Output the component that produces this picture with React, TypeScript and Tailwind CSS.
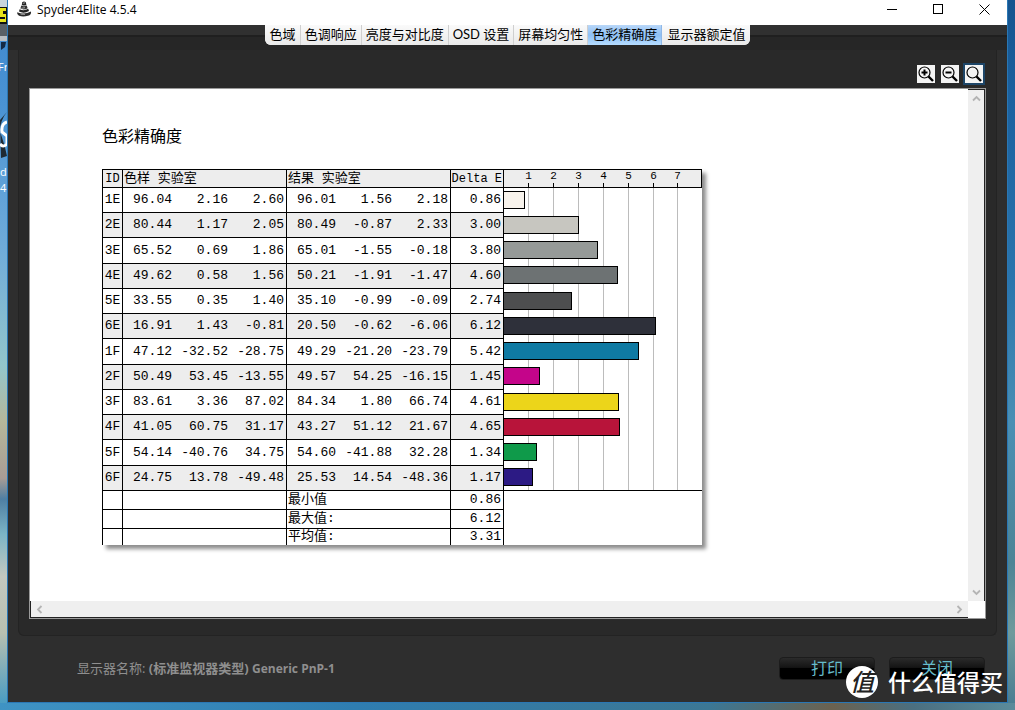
import React, { useState } from "react";

interface IPatch {
  id: string;
  sample: string[];
  result: string[];
  deltaE: string;
  color: string;
}

const patches: IPatch[] = [
  { id: "1E", sample: ["96.04", "2.16", "2.60"], result: ["96.01", "1.56", "2.18"], deltaE: "0.86", color: "#f8f3ec" },
  { id: "2E", sample: ["80.44", "1.17", "2.05"], result: ["80.49", "-0.87", "2.33"], deltaE: "3.00", color: "#c7c6c0" },
  { id: "3E", sample: ["65.52", "0.69", "1.86"], result: ["65.01", "-1.55", "-0.18"], deltaE: "3.80", color: "#969a98" },
  { id: "4E", sample: ["49.62", "0.58", "1.56"], result: ["50.21", "-1.91", "-1.47"], deltaE: "4.60", color: "#6d7273" },
  { id: "5E", sample: ["33.55", "0.35", "1.40"], result: ["35.10", "-0.99", "-0.09"], deltaE: "2.74", color: "#4d4e4f" },
  { id: "6E", sample: ["16.91", "1.43", "-0.81"], result: ["20.50", "-0.62", "-6.06"], deltaE: "6.12", color: "#2e303a" },
  { id: "1F", sample: ["47.12", "-32.52", "-28.75"], result: ["49.29", "-21.20", "-23.79"], deltaE: "5.42", color: "#0f7aa3" },
  { id: "2F", sample: ["50.49", "53.45", "-13.55"], result: ["49.57", "54.25", "-16.15"], deltaE: "1.45", color: "#c4058a" },
  { id: "3F", sample: ["83.61", "3.36", "87.02"], result: ["84.34", "1.80", "66.74"], deltaE: "4.61", color: "#ecd51a" },
  { id: "4F", sample: ["41.05", "60.75", "31.17"], result: ["43.27", "51.12", "21.67"], deltaE: "4.65", color: "#b8143a" },
  { id: "5F", sample: ["54.14", "-40.76", "34.75"], result: ["54.60", "-41.88", "32.28"], deltaE: "1.34", color: "#0f9a4a" },
  { id: "6F", sample: ["24.75", "13.78", "-49.48"], result: ["25.53", "14.54", "-48.36"], deltaE: "1.17", color: "#2c1a84" },
];

const summary = [
  { label: "最小值", value: "0.86" },
  { label: "最大值:", value: "6.12" },
  { label: "平均值:", value: "3.31" },
];

const tabs = ["色域", "色调响应", "亮度与对比度", "OSD 设置", "屏幕均匀性", "色彩精确度", "显示器额定值"];

// Chart scale
const UNIT = 24.85;
const ROW = 25.25;
const ticks = [1, 2, 3, 4, 5, 6, 7];
const tickX = (n: number) => Math.floor(n * UNIT) + 0.5;

const cell = "border-l border-t border-black p-0";

const Values = ({ values }: { values: string[] }) => (
  <div className="grid grid-cols-[49px_56px_56px] pr-0.5 text-right">
    {values.map((v, i) => (
      <span key={i}>{v}</span>
    ))}
  </div>
);

const AxisLabels = () => (
  <svg width="197" height="17" className="block">
    {ticks.map((n) => (
      <g key={n}>
        <text x={tickX(n)} y="9" textAnchor="middle" fontSize="11">
          {n}
        </text>
        <line x1={tickX(n)} x2={tickX(n)} y1="13" y2="17" stroke="#000" />
      </g>
    ))}
  </svg>
);

const DeltaChart = () => (
  <svg width="198" height="302" className="block">
    {ticks.map((n) => (
      <line key={n} x1={tickX(n)} x2={tickX(n)} y1="0" y2="302" stroke="#bcbcbc" />
    ))}
    {patches.map((p, i) => (
      <rect
        key={p.id}
        x="-1.5"
        y={Math.floor(i * ROW) + 3.5}
        width={Math.round(Number(p.deltaE) * UNIT) + 1}
        height="17"
        fill={p.color}
        stroke="#000"
      />
    ))}
  </svg>
);

const AccuracyTable = () => (
  <table className="border-separate border-spacing-0 bg-white font-['Liberation_Mono','Noto_Sans_CJK_SC',monospace] text-[13px] leading-4 text-black shadow-[4px_4px_4px_rgba(0,0,0,0.45)]">
    <thead>
      <tr className="h-[18px] bg-[#ededed] text-left">
        <th className={`${cell} w-5 text-center text-xs leading-4 font-normal`}>ID</th>
        <th className={`${cell} w-[164px] pl-px font-normal`}>色样 实验室</th>
        <th className={`${cell} w-[164px] pl-px font-normal`}>结果 实验室</th>
        <th className={`${cell} w-[53px] pr-px text-right text-xs leading-4 font-normal`}>Delta E</th>
        <th className={`${cell} border-r font-normal`}>
          <AxisLabels />
        </th>
      </tr>
    </thead>
    <tbody>
      {patches.map((p, i) => (
        <tr key={p.id} className={i % 4 === 2 ? "h-[26px]" : "h-[25px]"}>
          <td className={`${cell} text-center ${i % 2 ? "bg-[#ededed]" : ""}`}>{p.id}</td>
          <td className={`${cell} ${i % 2 ? "bg-[#ededed]" : ""}`}>
            <Values values={p.sample} />
          </td>
          <td className={`${cell} ${i % 2 ? "bg-[#ededed]" : ""}`}>
            <Values values={p.result} />
          </td>
          <td className={`${cell} pr-0.5 text-right ${i % 2 ? "bg-[#ededed]" : ""}`}>{p.deltaE}</td>
          {i === 0 && (
            <td rowSpan={patches.length} className={cell}>
              <DeltaChart />
            </td>
          )}
        </tr>
      ))}
      {summary.map((s, i) => (
        <tr key={s.label} className={i === 2 ? "h-[17px]" : "h-[19px]"}>
          <td className={cell}></td>
          <td className={cell}></td>
          <td className={`${cell} pl-px`}>{s.label}</td>
          <td className={`${cell} pr-0.5 text-right`}>{s.value}</td>
          {i === 0 && <td rowSpan={3} className={cell}></td>}
        </tr>
      ))}
    </tbody>
  </table>
);

const Magnifier = ({ sign }: { sign?: "plus" | "minus" }) => (
  <svg width="18" height="18" viewBox="0 0 18 18" fill="none" stroke="#000">
    <circle cx="7.5" cy="7.5" r="5.5" strokeWidth="1.2" />
    <path d="M11.5 11.5L16 16" strokeWidth="2.4" />
    {sign && <path d="M4.5 7.5H10.5" strokeWidth="2" />}
    {sign === "plus" && <path d="M7.5 4.5V10.5" strokeWidth="2" />}
  </svg>
);

const Chevron = ({ d }: { d: string }) => (
  <svg width="9" height="9" viewBox="0 0 9 9" fill="none" stroke="#b4b4b4" strokeWidth="1.8">
    <path d={d} />
  </svg>
);

const TitleBar = () => (
  <header className="flex h-[25px] items-start bg-white text-black">
    <svg width="16" height="17" viewBox="0 0 16 17" className="ml-2 shrink-0">
      <path d="M6.2 2.2Q8 0.6 9.8 2.2L10.4 5Q8 6.2 5.8 5Z" fill="#222" />
      <path d="M5.3 5.6Q8 7 10.8 5.5L11.6 8.2Q8 10.4 4.4 8.6Z" fill="#333" />
      <path d="M3.6 9.2Q8 11.4 12.2 8.8L13 11Q8 14 3 11.6Z" fill="#222" />
      <path d="M1.2 12.2Q8 15 15 11.4Q15.6 14.6 12 15.8Q7 17 3 15.8Q0.6 14.6 1.2 12.2Z" fill="#2b2b2b" />
      <path d="M6.8 3.4L9 2.8M5.4 8.3L9 7.7M4.6 14.2L9 14.4" stroke="#bbb" strokeWidth="0.8" />
    </svg>
    <h1 className="ml-[5px] flex-1 text-xs leading-5">Spyder4Elite 4.5.4</h1>
    <button aria-label="最小化" className="flex h-[19px] w-[46px] items-center justify-center">
      <svg width="11" height="11" stroke="#000">
        <path d="M0 5.5H10" />
      </svg>
    </button>
    <button aria-label="最大化" className="flex h-[19px] w-[46px] items-center justify-center">
      <svg width="11" height="11" stroke="#000" fill="none">
        <rect x="0.5" y="0.5" width="9" height="9" />
      </svg>
    </button>
    <button aria-label="关闭窗口" className="flex h-[19px] w-[46px] items-center justify-center">
      <svg width="11" height="11" stroke="#000">
        <path d="M0.5 0.5L10.5 10.5M10.5 0.5L0.5 10.5" />
      </svg>
    </button>
  </header>
);

// Slices of the desktop icons that show beside the window
const DesktopEdge = () => (
  <svg width="7" height="200" className="block">
    <rect y="0" width="7" height="7" fill="#c9d6dc" />
    <rect y="7" width="7" height="17" fill="#111" />
    <rect y="8" width="6" height="14" fill="#e8e51c" />
    <path d="M3 11H6V14H3ZM0 17H5V19H0Z" fill="#111" />
    <rect y="24" width="7" height="12" fill="#596066" />
    <rect y="36" width="7" height="5" fill="#b9bec2" />
    <path d="M1 42H6L5 47L1 50Z" fill="#152a44" />
    <text x="-2" y="71" fontSize="11" fill="#fff">
      Fr
    </text>
    <path d="M7 112Q0 120 0 132Q4 142 7 156L1 158L0 120Z" fill="#1f2a33" />
    <path d="M7 122Q1 124 2 132L7 136V144Q3 148 0 144" stroke="#fff" strokeWidth="3" fill="none" />
    <text x="0" y="176" fontSize="11" fill="#fff">
      d
    </text>
    <text x="0" y="192" fontSize="11" fill="#fff">
      4
    </text>
  </svg>
);

const footerButton =
  "h-[23px] w-24 rounded-sm border border-[#1c1c1c] bg-[linear-gradient(#2b2b2b,#141414_45%,#000_50%,#000)] text-base leading-5 text-[#66bccb]";

const App: React.FC = () => {
  const [activeTab, setActiveTab] = useState("色彩精确度");

  return (
    <div className="relative flex min-h-screen flex-col bg-[linear-gradient(90deg,#3f93c4,#2f7db0_35%,#3c7794_70%,#6b6250_82%,#4b6f80_90%,#5b8b9b)] font-['Open_Sans','Noto_Sans_CJK_SC',sans-serif]">
      <div className="flex flex-1">
        <div className="w-[7px] shrink-0 bg-[linear-gradient(#3f87cc,#4a93d4_15%,#6fabd9_35%,#93c6cb_52%,#b5b79a_60%,#a99c95_68%,#4f7fa3_71%,#7cb5c6_76%,#c3c8bf_82%,#b8c0b0_90%,#4a9cc2)]">
          <DesktopEdge />
        </div>

        <div className="flex min-w-0 flex-1 flex-col border-x border-b border-[#2a77b4] bg-[#2e2e2e]">
          <TitleBar />

          <nav className="flex h-[25px] items-start justify-center bg-[linear-gradient(#303030_10px,#1f1f1f_10px,#1f1f1f_12px,#262626_12px)]">
            <div
              role="tablist"
              className="flex h-5 overflow-hidden rounded-b-md bg-[#f2f2f2] font-['Lato','Noto_Sans_CJK_SC',sans-serif]"
            >
              {tabs.map((tab) => (
                <button
                  key={tab}
                  role="tab"
                  aria-selected={tab === activeTab}
                  onClick={() => setActiveTab(tab)}
                  className={`border-r px-1 pb-0.5 text-[13px] leading-[18px] whitespace-nowrap text-black first:pl-[5px] last:border-r-0 last:px-[5px] ${
                    tab === activeTab
                      ? "border-[#8fb8e8] bg-[linear-gradient(#b9d7f8,#8dbff5_50%,#b5dcff)]"
                      : "border-[#cfcfcf] bg-[linear-gradient(#fafafa,#e9e9e9)]"
                  }`}
                >
                  {tab}
                </button>
              ))}
            </div>
          </nav>

          <main className="mx-[10px] flex flex-1 flex-col rounded-b-md border border-t-0 border-[#232323] bg-[#292929] px-[10px] pt-[15px] pb-4">
            <div className="mb-[5px] flex justify-end gap-1.5 pr-[3px]">
              <button aria-label="放大" className="bg-[#f4f4f4]">
                <Magnifier sign="plus" />
              </button>
              <button aria-label="缩小" className="bg-[#f4f4f4]">
                <Magnifier sign="minus" />
              </button>
              <button aria-label="适合窗口" className="bg-[#f4f4f4] outline-2 outline-[#1d4567]">
                <Magnifier />
              </button>
            </div>

            <div className="flex flex-1 flex-col border border-[#9a9a9a] bg-white">
              <div className="flex flex-1">
                <section className="min-w-0 flex-1 px-[72px] pt-[35px] pb-14">
                  <h2 className="mb-[21px] text-base leading-6 text-black">色彩精确度</h2>
                  <AccuracyTable />
                </section>
                <div className="flex w-[17px] flex-col items-center justify-between border-t border-r border-[#222] bg-[#efefef] py-1">
                  <button aria-label="向上滚动">
                    <Chevron d="M1 6.5L4.5 3L8 6.5" />
                  </button>
                  <button aria-label="向下滚动">
                    <Chevron d="M1 2.5L4.5 6L8 2.5" />
                  </button>
                </div>
              </div>
              <div className="flex h-[17px]">
                <div className="flex flex-1 items-center justify-between border-b border-l border-[#222] bg-[#efefef] px-1">
                  <button aria-label="向左滚动">
                    <Chevron d="M6.5 1L3 4.5L6.5 8" />
                  </button>
                  <button aria-label="向右滚动">
                    <Chevron d="M2.5 1L6 4.5L2.5 8" />
                  </button>
                </div>
                <div className="w-[17px]"></div>
              </div>
            </div>
          </main>

          <footer className="flex h-[66px] items-center gap-3.5 pr-[22px] pb-0.5 pl-[69px]">
            <p className="flex-1 text-[13px] leading-5 text-[#8f8f8f]">
              显示器名称: <b>(标准监视器类型)</b> <b className="text-xs leading-5">Generic PnP-1</b>
            </p>
            <button className={footerButton}>打印</button>
            <button className={footerButton}>关闭</button>
          </footer>
        </div>

        <div className="w-[7px] shrink-0 bg-[linear-gradient(#15548f,#1c62a0_15%,#2a75ad_40%,#4a8fb4_60%,#4d8496_80%,#6f9a9c_90%,#4b7e92)]"></div>
      </div>
      <div className="h-[7px]"></div>

      {/* Watermark */}
      <div className="pointer-events-none absolute right-3 bottom-3 flex items-center gap-2.5 text-white">
        <span className="flex size-8 items-center justify-center rounded-full bg-white text-2xl leading-8 font-medium text-[#222] italic">
          值
        </span>
        <span className="text-[23px] leading-8 font-medium">什么值得买</span>
      </div>
    </div>
  );
};

export default App;
